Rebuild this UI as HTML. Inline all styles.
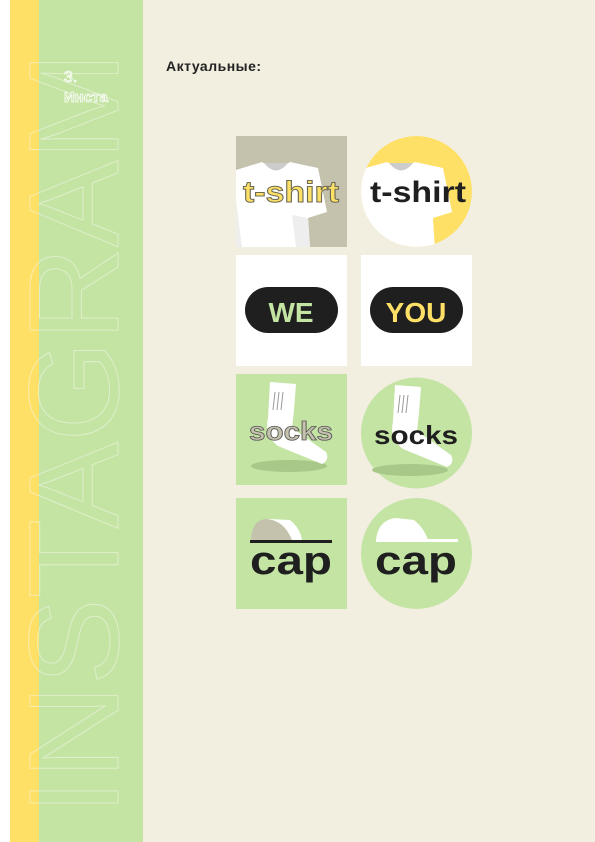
<!DOCTYPE html>
<html><head><meta charset="utf-8"><style>
html,body{margin:0;padding:0}
body{width:595px;height:842px;position:relative;background:#f2efe1;overflow:hidden;font-family:"Liberation Sans",sans-serif}
.w{position:absolute;left:0;top:0;width:10px;height:842px;background:#fff}
.y{position:absolute;left:10px;top:0;width:29px;height:842px;background:#ffe066}
.g{position:absolute;left:39px;top:0;width:104px;height:842px;background:#c4e4a4}
.h{position:absolute;left:166px;top:58px;font-size:14px;font-weight:bold;color:#222;letter-spacing:0.5px}
</style></head><body>
<div class="w"></div><div class="y"></div><div class="g"></div>
<svg style="position:absolute;left:0;top:0" width="595" height="842">
<text transform="translate(118,815) rotate(-90)" font-family="Liberation Sans" font-size="128" textLength="763" lengthAdjust="spacingAndGlyphs" fill="none" stroke="#f5f5ea" stroke-opacity="0.55" stroke-width="1">INSTAGRAM</text>
<text x="64" y="82" font-family="Liberation Sans" font-size="16" fill="none" stroke="#fff" stroke-width="0.8">3.</text>
<text x="64" y="102" font-family="Liberation Sans" font-size="15" font-weight="bold" fill="#c4e4a4" stroke="#fff" stroke-width="0.8">Инста</text>

<!-- tile 1 -->
<rect x="236" y="136" width="111" height="111" fill="#c4c1ac"/>
<path d="M236 170 L262 162 Q276 172 290 162 L318 168 L327 212 L308 218 L310 247 L236 247 Z" fill="#fff"/>
<path d="M292 215 L296 247 L310 247 L308 218 Z" fill="#eee"/>
<path d="M236 200 L242 247 L236 247 Z" fill="#eee"/>
<path d="M264 163 Q276 178 288 163 Z" fill="#ccc"/>
<text x="291" y="202" text-anchor="middle" font-size="30" font-weight="bold" fill="#ffe066" stroke="#6a6a55" stroke-width="1" textLength="96" lengthAdjust="spacingAndGlyphs">t-shirt</text>
<!-- tile 2 -->
<clipPath id="c2"><circle cx="416.5" cy="191.5" r="55.5"/></clipPath>
<g clip-path="url(#c2)">
<circle cx="416.5" cy="191.5" r="55.5" fill="#ffe066"/>
<path d="M359 170 L387 162 Q401 172 415 162 L443 168 L452 212 L433 218 L435 250 L359 250 Z" fill="#fff"/>
<path d="M389 163 Q401 178 413 163 Z" fill="#ccc"/>
</g>
<text x="418" y="202" text-anchor="middle" font-size="30" font-weight="bold" fill="#1f1f1f" textLength="96" lengthAdjust="spacingAndGlyphs">t-shirt</text>
<!-- row 2 -->
<rect x="236" y="255" width="111" height="111" fill="#fff"/>
<rect x="245" y="287" width="93" height="46" rx="23" fill="#1f1f1f"/>
<text x="291" y="322" text-anchor="middle" font-size="28" font-weight="bold" fill="#c4e4a4">WE</text>
<rect x="361" y="255" width="111" height="111" fill="#fff"/>
<rect x="370" y="287" width="93" height="46" rx="23" fill="#1f1f1f"/>
<text x="416" y="322" text-anchor="middle" font-size="28" font-weight="bold" fill="#ffe066">YOU</text>
<!-- row 3 -->
<rect x="236" y="374" width="111" height="111" fill="#c4e4a4"/>
<ellipse cx="289" cy="466" rx="38" ry="6" fill="#a8c88a"/>
<path d="M270 382 L296 384 L294 410 L292 428 L326 452 Q330 460 322 464 L278 446 Q264 436 268 418 Z" fill="#fff"/>
<path d="M275 392 L273 410 M279 392 L277 410 M283 392 L281 410" stroke="#999" stroke-width="1"/>
<text x="291" y="440" text-anchor="middle" font-size="26" font-weight="bold" fill="#c4c1ac" stroke="#555" stroke-width="0.8" textLength="84" lengthAdjust="spacingAndGlyphs">socks</text>
<circle cx="416.5" cy="433" r="55.5" fill="#c4e4a4"/>
<ellipse cx="410" cy="470" rx="38" ry="6" fill="#a8c88a"/>
<path d="M395 385 L421 387 L419 413 L417 431 L451 455 Q455 463 447 467 L403 449 Q389 439 393 421 Z" fill="#fff"/>
<path d="M400 395 L398 413 M404 395 L402 413 M408 395 L406 413" stroke="#999" stroke-width="1"/>
<text x="416" y="444" text-anchor="middle" font-size="26" font-weight="bold" fill="#1f1f1f" textLength="84" lengthAdjust="spacingAndGlyphs">socks</text>
<!-- row 4 -->
<rect x="236" y="498" width="111" height="111" fill="#c4e4a4"/>
<path d="M251 540 Q252 520 270 519 L290 520 Q300 528 302 540 Z" fill="#fff"/>
<path d="M251 540 Q252 520 266 519 Q284 520 292 540 Z" fill="#c4c1ac"/>
<rect x="250" y="540" width="82" height="3" fill="#1f1f1f"/>
<text x="291" y="574" text-anchor="middle" font-size="40" font-weight="bold" fill="#1f1f1f" textLength="82" lengthAdjust="spacingAndGlyphs">cap</text>
<circle cx="416.5" cy="553.5" r="55.5" fill="#c4e4a4"/>
<path d="M376 540 Q378 520 396 518 L414 520 Q424 528 428 540 Z" fill="#fff"/>
<rect x="376" y="539" width="82" height="3" fill="#fff"/>
<text x="416" y="574" text-anchor="middle" font-size="40" font-weight="bold" fill="#1f1f1f" textLength="82" lengthAdjust="spacingAndGlyphs">cap</text>
</svg>
<div class="h">Актуальные:</div>
</body></html>
